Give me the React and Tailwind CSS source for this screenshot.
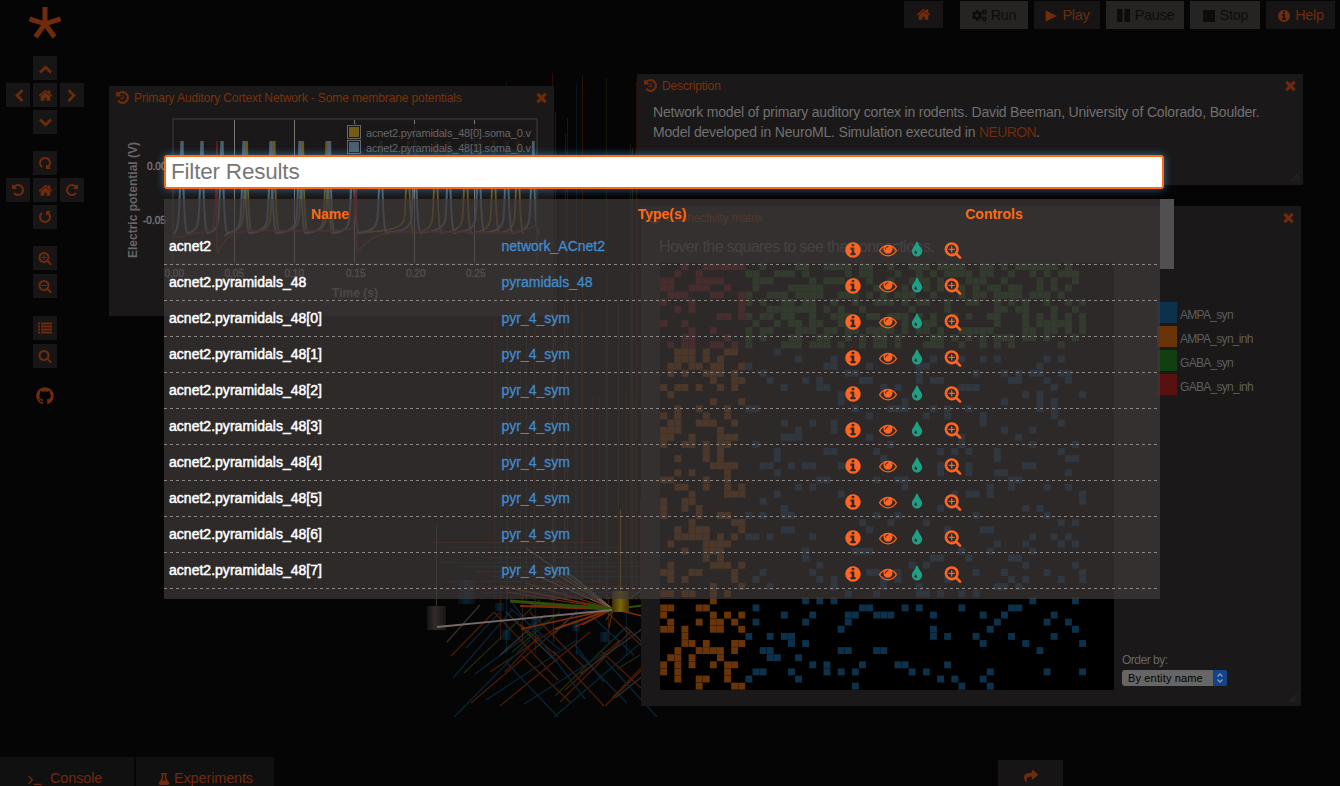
import React from "react";
import { FaCogs, FaFlask, FaGithub, FaShare } from "react-icons/fa";

const PATHS = {
  home: "M1472 992v480q0 26-19 45t-45 19h-384v-384h-256v384h-384q-26 0-45-19t-19-45v-480q0-1 .5-3t.5-3l575-474 575 474q1 2 1 6zm223-69l-62 74q-8 9-21 11h-3q-13 0-21-7l-692-577-692 577q-12 8-24 7-13-2-21-11l-62-74q-8-10-7-23.5t11-21.5l719-599q32-26 76-26t76 26l244 204v-195q0-14 9-23t23-9h192q14 0 23 9t9 23v408l219 182q10 8 11 21.5t-7 23.5z",
  info: "M1152 1376v-160q0-14-9-23t-23-9h-96v-512q0-14-9-23t-23-9h-320q-14 0-23 9t-9 23v160q0 14 9 23t23 9h96v320h-96q-14 0-23 9t-9 23v160q0 14 9 23t23 9h448q14 0 23-9t9-23zm-128-896v-160q0-14-9-23t-23-9h-192q-14 0-23 9t-9 23v160q0 14 9 23t23 9h192q14 0 23-9t9-23zm640 416q0 209-103 385.5t-279.5 279.5-385.5 103-385.5-103-279.5-279.5-103-385.5 103-385.5 279.5-279.5 385.5-103 385.5 103 279.5 279.5 103 385.5z",
  tint: "M896 1152q0-36-20-69-1-1-15.5-22.5t-25.5-38-25-44-21-50.5q-4-16-21-16t-21 16q-7 23-21 50.5t-25 44-25.5 38-15.5 22.5q-20 33-20 69 0 53 37.5 90.5t90.5 37.5 90.5-37.5 37.5-90.5zm512-128q0 212-150 362t-362 150-362-150-150-362q0-145 81-275 6-9 62.5-90.5t101-151 99.5-178 83-201.5q9-30 34-47t51-17 51.5 17 33.5 47q28 93 83 201.5t99.5 178 101 151 62.5 90.5q81 127 81 275z",
  eye: "M1664 960q-152-236-381-353 61 104 61 225 0 185-131.5 316.5t-316.5 131.5-316.5-131.5-131.5-316.5q0-121 61-225-229 117-381 353 133 205 333.5 326.5t434.5 121.5 434.5-121.5 333.5-326.5zm-720-384q0-20-14-34t-34-14q-125 0-214.5 89.5t-89.5 214.5q0 20 14 34t34 14 34-14 14-34q0-86 61-147t147-61q20 0 34-14t14-34zm848 384q0 34-20 69-140 230-376.5 368.5t-499.5 138.5-499.5-139-376.5-368q-20-35-20-69t20-69q140-229 376.5-368t499.5-139 499.5 139 376.5 368q20 35 20 69z",
  zoomIn: "M1088 800v64q0 13-9.5 22.5t-22.5 9.5h-224v224q0 13-9.5 22.5t-22.5 9.5h-64q-13 0-22.5-9.5t-9.5-22.5v-224h-224q-13 0-22.5-9.5t-9.5-22.5v-64q0-13 9.5-22.5t22.5-9.5h224v-224q0-13 9.5-22.5t22.5-9.5h64q13 0 22.5 9.5t9.5 22.5v224h224q13 0 22.5 9.5t9.5 22.5zm128 32q0-185-131.5-316.5t-316.5-131.5-316.5 131.5-131.5 316.5 131.5 316.5 316.5 131.5 316.5-131.5 131.5-316.5zm512 832q0 53-37.5 90.5t-90.5 37.5q-54 0-90-38l-343-342q-179 124-399 124-143 0-273.5-55.5t-225-150-150-225-55.5-273.5 55.5-273.5 150-225 225-150 273.5-55.5 273.5 55.5 225 150 150 225 55.5 273.5q0 220-124 399l343 343q37 37 37 90z",
  search: "M1216 832q0-185-131.5-316.5t-316.5-131.5-316.5 131.5-131.5 316.5 131.5 316.5 316.5 131.5 316.5-131.5 131.5-316.5zm512 832q0 53-37.5 90.5t-90.5 37.5q-54 0-90-38l-343-342q-179 124-399 124-143 0-273.5-55.5t-225-150-150-225-55.5-273.5 55.5-273.5 150-225 225-150 273.5-55.5 273.5 55.5 225 150 150 225 55.5 273.5q0 220-124 399l343 343q37 37 37 90z",
  times: "M1490 1322q0 40-28 68l-136 136q-28 28-68 28t-68-28l-294-294-294 294q-28 28-68 28t-68-28l-136-136q-28-28-28-68t28-68l294-294-294-294q-28-28-28-68t28-68l136-136q28-28 68-28t68 28l294 294 294-294q28-28 68-28t68 28l136 136q28 28 28 68t-28 68l-294 294 294 294q28 28 28 68z",
  repeat: "M1664 256v448q0 26-19 45t-45 19h-448q-42 0-59-40-17-39 14-69l138-138q-148-137-349-137-104 0-198.5 40.5t-163.5 109.5-109.5 163.5-40.5 198.5 40.5 198.5 109.5 163.5 163.5 109.5 198.5 40.5q119 0 225-52t179-147q7-10 23-12 15 0 25 9l137 138q9 8 9.5 20.5t-7.5 22.5q-109 132-264 204.5t-327 72.5q-156 0-298-61t-245-164-164-245-61-298 61-298 164-245 245-164 298-61q147 0 284.5 55.5t244.5 156.5l130-129q29-31 70-14 39 17 39 59z",
  history: "M1664 896q0 156-61 298t-164 245-245 164-298 61q-172 0-327-72.5t-264-204.5q-7-10-6.5-22.5t8.5-20.5l137-138q10-9 25-9 16 2 23 12 73 95 179 147t225 52q104 0 198.5-40.5t163.5-109.5 109.5-163.5 40.5-198.5-40.5-198.5-109.5-163.5-163.5-109.5-198.5-40.5q-98 0-188 35.5t-160 101.5l137 138q31 30 14 69-17 40-59 40h-448q-26 0-45-19t-19-45v-448q0-42 40-59 39-17 69 14l130 129q107-101 244.5-156.5t284.5-55.5q156 0 298 61t245 164 164 245 61 298zm-640-288v448q0 14-9 23t-23 9h-320q-14 0-23-9t-9-23v-64q0-14 9-23t23-9h224v-352q0-14 9-23t23-9h64q14 0 23 9t9 23z",
  zoomOut: "M448 768h640v128h-640zM1216 832q0-185-131.5-316.5t-316.5-131.5-316.5 131.5-131.5 316.5 131.5 316.5 316.5 131.5 316.5-131.5 131.5-316.5zm512 832q0 53-37.5 90.5t-90.5 37.5q-54 0-90-38l-343-342q-179 124-399 124-143 0-273.5-55.5t-225-150-150-225-55.5-273.5 55.5-273.5 150-225 225-150 273.5-55.5 273.5 55.5 225 150 150 225 55.5 273.5q0 220-124 399l343 343q37 37 37 90z",
  list: "M0 192h256v256H0zM384 192h1408v256H384zM0 576h256v256H0zM384 576h1408v256H384zM0 960h256v256H0zM384 960h1408v256H384zM0 1344h256v256H0zM384 1344h1408v256H384z",
  up: "M224 1216l672-672 672 672-200 200-472-472-472 472z",
  play: "M200 150L1650 896 200 1642z",
  pause: "M128 128h640v1536H128zM1024 128h640v1536H1024z",
  stop: "M128 128h1536v1536H128z",
};

function Icon({ name, className = "" }) {
  return (
    <svg viewBox="0 0 1792 1792" className={`shrink-0 fill-current ${className}`}>
      <path d={PATHS[name]} />
    </svg>
  );
}

/* One entry per matrix row: columns that hold a connection. */
const MATRIX = [
  "3 6-11 14 19-20 23-26 28-29 32 35-37 39-42 45-46 48 50-55 57",
  "2 5 12-13 16-18 20 26 28-29 33 36 38 40-43 45-46 49 52 54 56-58",
  "0-1 5-8 13-15 21 23-25 27 29 32 35-37 39 43-45 48 53 55 58",
  "0-1 4-6 9 13 18-22 26 30-31 34 37 39 42 44 46-47 49-50 53 55 57",
  "1-3 7-8 11-12 15-17 19-22 25-27 29 31 33-35 38 42 44-45 47-50 52-54 56",
  "0 4 11-12 14 17-18 20-21 24 27 30-32 34 36-37 40 43-44 47 49 51 54 57 59",
  "2 4 11 15-21 23 25 28 35 40 47-48 50-51 55 58",
  "8-9 11-12 14-15 17-18 21 24-26 29-30 32-34 36 38 41 43 46-47 51 53 55 57 59",
  "0 3 13 16 18-19 21-22 25-26 31 34 37-38 47 51 53-57 59",
  "4 7 12 14-15 19-21 23-24 26-27 29-32 34 36-37 39 42-46 51-52 54-55 57 59",
  "3-4 9 12 14 18-19 22-23 26 28 30-31 33 38-39 41 43 45 47-49 51-52 54 58",
  "1 3-4 7-8 10 12 17-19 21-23 25 28 30-31 33 37-39 42 45 47 49 56",
  "2-4 6 9-10 16",
  "2-4 6 8 19 24 38 42 45 47 54 56",
  "1-2 4-5 7-8 11-12 23-24 29 36-37 53",
  "1 3 6-8 10 14 26-27 36 44 48 50 52-53 56-57",
  "7 10-11 15 20 22 28-29 36 38-39 49-50 54 57",
  "0 2-3 5 8 10 17 22-23 31 33 42-44 55",
  "1 25 27 51 53 59",
  "7 11 25 34 48 53 55",
  "2 5 9 12-13 27 32-34 38 40 43 53 55",
  "0 2 6 9 29 37 40 45 55",
  "1-2 5-7 10 17 21 24 45 56",
  "0-2 8 19 24 48 52",
  "0-1 4 8-10 17-19 29 42 50",
  "0 3-4 6 8-9 13 32 42 52 58",
  "6 8 16 23-24 30 39 41 43 47 56",
  "2 6 8 16 31 47 57-58",
  "7-10 14-15 18 20-21 25 39 43 51-52",
  "2 4 9 16 39 43 47-48 57",
  "0-1 6 9 22-23 30 33-34 49-50",
  "2-3 6 9 11 19 21 34 46 49 54 57",
  "4 9-11 16 25 41 43-44 46 59",
  "0 3-4 14 59",
  "0 3 5 17 39 51 53",
  "0 5 8-9 12 14 17-18 30 33 44 54",
  "4 10-11 28 32 37 56 58",
  "2 4-6 11 17-18 29 40 45-46",
  "2-6 8 10 12-13 15 21 52 55 57",
  "1 6-9 47 51 56 58",
  "3 6-8 20 27-29 42 46 52",
  "6 8 20 38-39 43 49-50",
  "1 7-9 11 22 35 37 51 58",
  "0-1 4-5 10 14 21 29-30 33 44 48 54 59",
  "1 3 10 13 22 24 31 33 40 49 51 56 59",
  "7 11 15 24 31 36 47-48 50",
  "0-1 3-4 7 9 26 30 36-37 39 42 44",
  "7 20 22 24 52 58",
  "0-1 5-6 13 28-29 34 36 42 49-50",
  "0 7 9 11 17 21 26-27 30-32 38 45 48 55",
  "1 5 7-8 10 13 20 26 47 54 57",
  "0-1 3 7-8 11 25 38 46 58",
  "3 12 15 17-18 38 40 44 49 55",
  "3-4 6 10-11 18 20 45 51 59",
  "2 5-8 10 14-15 25-26 30-31 53",
  "1-2 4 8 15-16 19",
  "0 2 4 7 9-10 21 23 28 33-34 40",
  "0 2 9 13-14 18 23 25 27 35 37 46 54 59",
  "2 5-6 9 12 19 39 41 45",
  "5 10-11 27 42 46",
];

function cellsOf(spec) {
  return spec.split(" ").flatMap((part) => {
    const [a, b = a] = part.split("-").map(Number);
    return Array.from({ length: b - a + 1 }, (_, i) => a + i);
  });
}

function Matrix() {
  return (
    <svg width="454" height="427" viewBox="0 0 454 427" className="block bg-black">
      {MATRIX.map((spec, r) =>
        cellsOf(spec).map((c) => (
          <rect
            key={`${r}-${c}`}
            x={c * 7.1 + 0.2}
            y={r * 7.11 + 0.2}
            width="6.9"
            height="6.9"
            fill={r < 12 ? (c < 12 ? "#591010" : "#123f12") : c < 12 ? "#693408" : "#0d314b"}
          />
        ))
      )}
    </svg>
  );
}

/* Membrane potential trace: spikes at the given abscissae over a recovering baseline. */
function trace(spikes, start) {
  let d = `M${start} 118`;
  let prev = start;
  spikes.forEach((x) => {
    const w = x - prev;
    d += ` C${prev + w * 0.3} 113 ${x - 5} 114 ${x - 3.5} 100 C${x - 2} 80 ${x - 1.5} 60 ${x - 0.7} 24 L${x + 0.7} 24 C${x + 1} 60 ${x + 2} 118 ${x + 6} 115`;
    prev = x + 6;
  });
  return d;
}

function Plot() {
  return (
    <svg width="445" height="200" viewBox="0 0 445 200" className="block font-['Liberation_Sans']">
      <g transform="translate(63 2)" fill="none">
        {[62.5, 122.5, 182.5, 242.5, 302.5].map((x) => (
          <path key={x} d={`M${x} 1V146`} stroke="#767676" strokeWidth="1" />
        ))}
        <path d={trace([74.5, 102, 130.5, 155, 181, 236, 264, 294, 322, 346], 52)} stroke="#6b5618" strokeWidth="1.8" />
        <path d={trace([10, 30, 50, 72, 99, 128, 157.5, 181, 209, 243, 277, 307, 335, 361], 1)} stroke="#4a5f6e" strokeWidth="2" />
        <path
          d="M1 119H10C20 113 35 116 40 112C43 108 44 85 45 23V132L46 135C52 121 58 115 75 113C105 111 165 115 180 111C183 108 184 75 184.500 5V125L186 134C196 119 207 116 225 114C255 112 330 117 346 114L365 108"
          stroke="#651f1f"
          strokeWidth="1.6"
        />
        <rect x="1" y="1" width="364" height="145" stroke="#2b2b2b" strokeWidth="2" />
        <path d="M182.500 2v5M242.500 2v5M302.500 2v5" stroke="#767676" />
      </g>
      <rect x="230" y="8" width="193" height="38" fill="#1a1818" fillOpacity=".85" />
      <g stroke="#666" fill="#1a1818">
        <rect x="238.500" y="9.500" width="13" height="13" />
        <rect x="238.500" y="24.500" width="13" height="13" />
      </g>
      <rect x="240" y="11" width="10" height="10" fill="#735c18" />
      <rect x="240" y="26" width="10" height="10" fill="#4a5f6e" />
      <g fill="#666" fontSize="11">
        <text x="257" y="21" textLength="165">acnet2.pyramidals_48[0].soma_0.v</text>
        <text x="257" y="36" textLength="165">acnet2.pyramidals_48[1].soma_0.v</text>
      </g>
      <g fill="#777" fontSize="10" stroke="#777" strokeWidth=".4">
        <text x="38" y="54">0.00</text>
        <text x="34" y="108">-0.05</text>
        <text x="55.500" y="161">0.00</text>
        <text x="115.500" y="161">0.05</text>
        <text x="175.500" y="161">0.10</text>
        <text x="237" y="161">0.15</text>
        <text x="297" y="161">0.20</text>
        <text x="357" y="161">0.25</text>
      </g>
      <g fill="#666" fontSize="12" fontWeight="700">
        <text x="223" y="181" textLength="46">Time (s)</text>
        <text transform="translate(27.500 142) rotate(-90)" textLength="116">Electric potential (V)</text>
      </g>
    </svg>
  );
}

const INK = ["#7a2d08", "#0d3a56", "#2f4a14", "#54504e"];
const VERTICALS = [
  [506, 81, 1], [552, 73, 0], [576, 84, 1], [582, 75, 0], [606, 78, 2], [555, 112, 3], [567, 118, 0], [565, 134, 0],
  [567, 130, 1], [630, 144, 2], [632, 148, 3], [636, 82, 0], [494, 320, 0], [500, 340, 1], [507, 330, 0], [520, 350, 1], [526, 300, 3],
  [534, 330, 0], [553, 300, 3], [564, 300, 0], [575, 290, 1], [581, 310, 0], [592, 398, 0], [599, 396, 1],
  [606, 340, 3], [607, 300, 1], [618, 300, 0], [626, 390, 0], [631, 300, 2], [635, 395, 1], [640, 500, 0],
];
const DIAGONALS = [
  [494, 612, 451, 656, 0], [500, 612, 466, 648, 1], [512, 610, 453, 678, 1], [540, 600, 464, 673, 2], [548, 620, 475, 674, 1],
  [556, 628, 490, 672, 0], [568, 620, 471, 703, 0], [577, 640, 486, 700, 1], [530, 640, 454, 717, 1], [590, 632, 500, 706, 0],
  [506, 662, 558, 717, 1], [506, 612, 557, 662, 3], [520, 624, 556, 655, 0], [522, 656, 571, 703, 0], [575, 645, 604, 682, 1],
  [553, 651, 604, 706, 0], [576, 651, 627, 703, 1], [626, 627, 657, 656, 3], [626, 627, 555, 696, 2], [609, 650, 524, 704, 1],
  [630, 632, 560, 702, 0], [649, 624, 580, 674, 3], [641, 668, 612, 698, 0], [626, 627, 602, 650, 1], [576, 612, 554, 634, 3],
  [585, 610, 634, 655, 1], [605, 610, 652, 656, 0], [644, 640, 554, 717, 1], [605, 706, 657, 655, 0], [601, 651, 654, 700, 0],
  [657, 665, 615, 698, 3], [605, 660, 657, 717, 1], [510, 600, 585, 699, 1], [640, 655, 617, 669, 2], [480, 605, 447, 642, 3],
  [494, 612, 558, 680, 0], [530, 612, 585, 668, 0], [545, 615, 500, 655, 3], [560, 612, 512, 652, 2], [620, 640, 565, 690, 0],
  [510, 608, 560, 650, 1], [540, 635, 505, 672, 0],
];
const FAN = [
  [520, 606, 0, 2], [530, 605, 0, 1], [555, 607, 0, 2], [521, 629, 0, 1.5], [555, 629, 0, 2],
  [575, 627, 0, 1.3], [582, 625, 0, 1.2], [500, 586, 0, 1.3], [525, 583, 0, 1.2], [540, 577, 3, 1], [556, 580, 0, 1.2], [526, 548, 3, 1],
  [550, 570, 3, 1], [565, 572, 2, 1], [570, 574, 3, 1], [588, 604, 2, 2], [506, 592, 0, 1], [609, 628, 0, 1], [606, 620, 2, 1.2],
  [657, 580, 2, 1.2], [680, 625, 0, 1.5], [690, 600, 2, 2], [510, 601, 2, 3],
];

function Scene() {
  return (
    <svg width="1340" height="786" viewBox="0 0 1340 786" className="absolute left-0 top-0" fill="none">
      <defs>
        <linearGradient id="gold">
          <stop offset="0" stopColor="#3b3008" />
          <stop offset=".5" stopColor="#7d6605" />
          <stop offset="1" stopColor="#3b3008" />
        </linearGradient>
        <linearGradient id="ash">
          <stop offset="0" stopColor="#141211" />
          <stop offset=".4" stopColor="#312b29" />
          <stop offset="1" stopColor="#181615" />
        </linearGradient>
        <linearGradient id="sea">
          <stop offset="0" stopColor="#051521" />
          <stop offset=".5" stopColor="#0b3048" />
          <stop offset="1" stopColor="#051521" />
        </linearGradient>
      </defs>
      <g opacity=".42">
        {VERTICALS.map(([x, y, k]) => (
          <path key={`${x}-${y}`} d={`M${x + 0.5} ${y}V600`} stroke={INK[k]} strokeOpacity=".75" />
        ))}
        {[542, 547, 552, 557, 562, 566, 571, 576, 581, 586, 592].map((y, i) => (
          <path key={y} d={`M${433 + ((i * 17) % 60)} ${y + 0.5}H${600 + ((i * 23) % 60)}`} stroke={INK[i % 3]} />
        ))}
        {[500, 506, 522, 535, 553, 576, 608, 626].map((x, i) => (
          <path key={x} d={`M${x + 0.5} 596V${640 + ((i * 13) % 25)}`} stroke={INK[i % 2]} strokeWidth="1.3" />
        ))}
      </g>
      <g opacity=".58" strokeWidth="1.3">
        {DIAGONALS.map(([a, b, c, d, k], i) => (
          <path key={i} d={`M${a} ${b}L${c} ${d}`} stroke={INK[k]} />
        ))}
      </g>
      {[[458, 580, 17, 24], [495, 603, 9, 8], [502, 630, 9, 10], [531, 618, 8, 10], [572, 621, 8, 10], [600, 632, 10, 10]].map(([x, y, w, h]) => (
        <rect key={x} x={x} y={y} width={w} height={h} fill="url(#sea)" opacity=".7" />
      ))}
      {FAN.map(([x, y, k, w], i) => (
        <path key={i} d={`M${x} ${y}L613 609`} stroke={["#7e2c05", "#0d3a56", "#2e4f0c", "#776c67"][k]} strokeWidth={w} />
      ))}
      <path d="M620.500 510V592" stroke="#7d6605" />
      <path d="M436.500 525V606" stroke="#3a3432" />
      <rect x="427" y="606" width="19" height="24" fill="url(#ash)" />
      <path d="M437 627L612 610" stroke="#776c67" strokeWidth="1.800" />
      <rect x="612" y="591" width="17" height="21" fill="url(#gold)" />
    </svg>
  );
}

function PadButton({ name, className = "", size = "size-[14px]" }) {
  return (
    <button className={`flex size-6 items-center justify-center bg-[#171516] text-[#6f2b0c] ${className}`}>
      <Icon name={name} className={size} />
    </button>
  );
}

function SideBar() {
  return (
    <nav className="absolute left-0 top-0 flex w-[90px] flex-col items-center">
      <svg width="34" height="34" viewBox="0 0 34 34" className="mt-[6px]" stroke="#6f2b0c" strokeWidth="5">
        <path d="M17 18V1M17 18L1.500 12.800M17 18L32.500 12.800M17 18L7.500 31M17 18L26.500 31" />
      </svg>
      <div className="mt-4 grid grid-cols-3 gap-[3px]">
        <PadButton name="up" className="col-start-2" size="size-[17px]" />
        <PadButton name="up" className="col-start-1 [&>svg]:-rotate-90" size="size-[17px]" />
        <PadButton name="home" size="size-[15px]" />
        <PadButton name="up" className="[&>svg]:rotate-90" size="size-[17px]" />
        <PadButton name="up" className="col-start-2 pt-[2px] [&>svg]:rotate-180" size="size-[17px]" />
      </div>
      <div className="mt-[17px] grid grid-cols-3 gap-[3px]">
        <PadButton name="repeat" className="col-start-2 [&>svg]:rotate-90" />
        <PadButton name="repeat" className="col-start-1 [&>svg]:-scale-x-100" />
        <PadButton name="home" size="size-[15px]" />
        <PadButton name="repeat" />
        <PadButton name="repeat" className="col-start-2 [&>svg]:rotate-90 [&>svg]:-scale-x-100" />
      </div>
      <div className="mt-[17px] flex flex-col gap-1">
        <PadButton name="zoomIn" />
        <PadButton name="zoomOut" />
      </div>
      <div className="mt-[18px] flex flex-col gap-1">
        <PadButton name="list" />
        <PadButton name="search" />
      </div>
      <FaGithub className="mt-[19px] size-[18px] text-[#6f2b0c]" />
    </nav>
  );
}

function TopBar() {
  const on = "bg-[#161415] text-[#6f2b0c]";
  const off = "bg-[#252423] text-[#0c0c0c]";
  const base = "flex h-7 items-center justify-center gap-1 pt-px text-[14.500px] tracking-[-0.3px]";
  return (
    <header className="absolute right-[5px] top-px flex items-start gap-[6px]">
      <button className={`mr-[11px] flex h-[27px] w-[39px] items-center justify-center ${on}`}>
        <Icon name="home" className="size-[15px]" />
      </button>
      <button className={`${base} w-[68px] ${off}`}>
        <FaCogs className="size-[15px]" />
        Run
      </button>
      <button className={`${base} w-[66px] ${on}`}>
        <Icon name="play" className="size-[14px]" />
        Play
      </button>
      <button className={`${base} w-[78px] ${off}`}>
        <Icon name="pause" className="size-[15px]" />
        Pause
      </button>
      <button className={`${base} w-[70px] ${off}`}>
        <Icon name="stop" className="size-[14px]" />
        Stop
      </button>
      <button className={`${base} w-[69px] ${on}`}>
        <Icon name="info" className="size-[14px]" />
        Help
      </button>
    </header>
  );
}

function Window({ title, className, titleClass = "", children }) {
  return (
    <section className={`absolute flex flex-col bg-[#1a1818] ${className}`}>
      <div className="flex h-[23px] shrink-0 items-center pl-[6px] pr-[5px] text-[#6f2b0c]">
        <Icon name="history" className="size-[15px]" />
        <h2 className={`ml-1 flex-1 whitespace-nowrap text-[12px] tracking-[-0.12px] text-[#7a3208] ${titleClass}`}>{title}</h2>
        <Icon name="times" className="size-[15px]" />
      </div>
      {children}
    </section>
  );
}

function Grip() {
  return (
    <svg width="8" height="8" viewBox="0 0 8 8" className="absolute bottom-1 right-1" stroke="#2e2c2c" strokeWidth=".8">
      <path d="M0 8L8 0M3 8L8 3M6 8L8 6" />
    </svg>
  );
}

const LEGEND = [
  ["AMPA_syn", "bg-[#0d314b]"],
  ["AMPA_syn_inh", "bg-[#693408]"],
  ["GABA_syn", "bg-[#123f12]"],
  ["GABA_syn_inh", "bg-[#591010]"],
];

const ROWS = [
  ["acnet2", "network_ACnet2"],
  ["acnet2.pyramidals_48", "pyramidals_48"],
  ...Array.from({ length: 8 }, (_, i) => [`acnet2.pyramidals_48[${i}]`, "pyr_4_sym"]),
];

function Spotlight() {
  return (
    <div className="absolute left-[164px] top-[155px] w-[1010px]">
      <input
        placeholder="Filter Results"
        className="block h-[34px] w-[1000px] rounded-[3px] border-2 border-[#ff6a10] bg-white px-[5px] text-[22.500px] tracking-[-0.2px] shadow-[0_0_8px_rgba(82,168,236,0.6)] outline-none placeholder:text-[#777]"
      />
      <div className="mt-[10px] flex h-[400px] items-start overflow-hidden">
        <div className="h-full w-[996px] bg-[#403b3a]/70">
          <div className="grid h-[30px] grid-cols-3 items-center text-center text-[14px] font-bold text-[#ff6a10]">
            <div>Name</div>
            <div>Type(s)</div>
            <div>Controls</div>
          </div>
          {ROWS.map(([name, type]) => (
            <div
              key={name}
              className="grid h-9 grid-cols-3 bg-[repeating-linear-gradient(90deg,#8a8786_0_3px,transparent_3px_6px)] bg-[length:100%_1px] bg-[position:0_100%] bg-no-repeat text-[14px]"
            >
              <div className="pl-[5px] pt-[7px] leading-[21px] tracking-[0.02px] text-white [-webkit-text-stroke:0.5px_white]">{name}</div>
              <div className="pl-[5.500px] pt-[7px] leading-[21px] text-[#428bca] [-webkit-text-stroke:0.3px_#428bca]">{type}</div>
              <div className="flex items-center pl-[16px] pt-[5px] text-[#ff6420]">
                <Icon name="info" className="size-[18px]" />
                <Icon name="eye" className="ml-[16.500px] size-[18px]" />
                <Icon name="tint" className="ml-[11px] size-[18px] text-[#1fa084]" />
                <Icon name="zoomIn" className="ml-[18.500px] size-[18px]" />
              </div>
            </div>
          ))}
        </div>
        <div className="h-[70px] w-[14px] bg-[#505050]" />
      </div>
    </div>
  );
}

export default function App() {
  return (
    <main className="relative h-[786px] w-[1340px] overflow-hidden bg-[#050505] font-['Liberation_Sans',Arial,sans-serif]">
      <Scene />
      <SideBar />
      <TopBar />

      <Window title="Primary Auditory Cortext Network - Some membrane potentials" className="left-[109px] top-[86px] h-[230px] w-[445px]">
        <div className="mt-[7px]">
          <Plot />
        </div>
      </Window>

      <Window title="Description" className="left-[637px] top-[74px] h-[111px] w-[666px]">
        <p className="whitespace-nowrap pl-4 pt-[5px] text-[14px] leading-5 tracking-[-0.185px] text-[#717171]">
          Network model of primary auditory cortex in rodents. David Beeman, University of Colorado, Boulder.
          <br />
          Model developed in NeuroML. Simulation executed in <span className="tracking-[-0.6px] text-[#6f2b0c]">NEURON</span>.
        </p>
        <Grip />
      </Window>

      <Window title="Connectivity matrix" titleClass="tracking-[-0.25px]" className="left-[641px] top-[206px] h-[500px] w-[660px]">
        <p className="pl-[18px] pt-[6px] text-[16px] leading-6 tracking-[-0.6px] text-[#555]">Hover the squares to see the connections.</p>
        <div className="flex pl-[19px] pt-[4px]">
          <Matrix />
          <div className="flex w-[180px] flex-col">
            <div className="flex flex-col gap-[3px] pl-[43px] pt-[39px]">
              {LEGEND.map(([label, color]) => (
                <div key={label} className="flex h-[21px] items-center">
                  <div className={`h-[21px] w-[20px] ${color}`} />
                  <span className="ml-[3px] mt-[4px] text-[12px] tracking-[-0.7px] text-[#5e5e5e]">{label}</span>
                </div>
              ))}
            </div>
            <div className="mt-auto pb-[4px] pl-2">
              <div className="text-[12px] leading-[17px] tracking-[-0.5px] text-[#666]">Order by:</div>
              <div className="mt-px flex h-[16px] w-[105px] items-center overflow-hidden rounded-[3px] bg-[#666]">
                <span className="flex-1 pl-[6px] text-[11px] tracking-[0.15px] text-black">By entity name</span>
                <svg width="14" height="16" viewBox="0 0 14 16" className="bg-[#11448a]" fill="none" stroke="#8d9bb3" strokeWidth="1.3">
                  <path d="M4.500 6.500L7 4l2.500 2.500M4.500 9.500L7 12l2.500-2.500" />
                </svg>
              </div>
            </div>
          </div>
        </div>
        <Grip />
      </Window>

      <footer className="absolute bottom-0 left-0 flex h-[29px] w-full items-end text-[14.500px] tracking-[-0.15px] text-[#6f2b0c]">
        <button className="flex h-[29px] w-[134px] items-center bg-[#101010] pl-7 pt-[14px]">
          <svg width="14" height="12" viewBox="0 0 14 12" fill="none" stroke="currentColor" strokeWidth="1.2">
            <path d="M0.500 3L4.500 7L0.500 11M6 11.400H13.500" />
          </svg>
          <span className="ml-2">Console</span>
        </button>
        <button className="ml-[2px] flex h-[29px] w-[138px] items-center bg-[#101010] pl-[22px] pt-[14px]">
          <FaFlask className="size-3" />
          <span className="ml-1">Experiments</span>
        </button>
        <button className="ml-[724px] flex h-[26px] w-[65px] items-center justify-center bg-[#161415] pt-[5px]">
          <FaShare className="size-[14px]" />
        </button>
      </footer>

      <Spotlight />
    </main>
  );
}
